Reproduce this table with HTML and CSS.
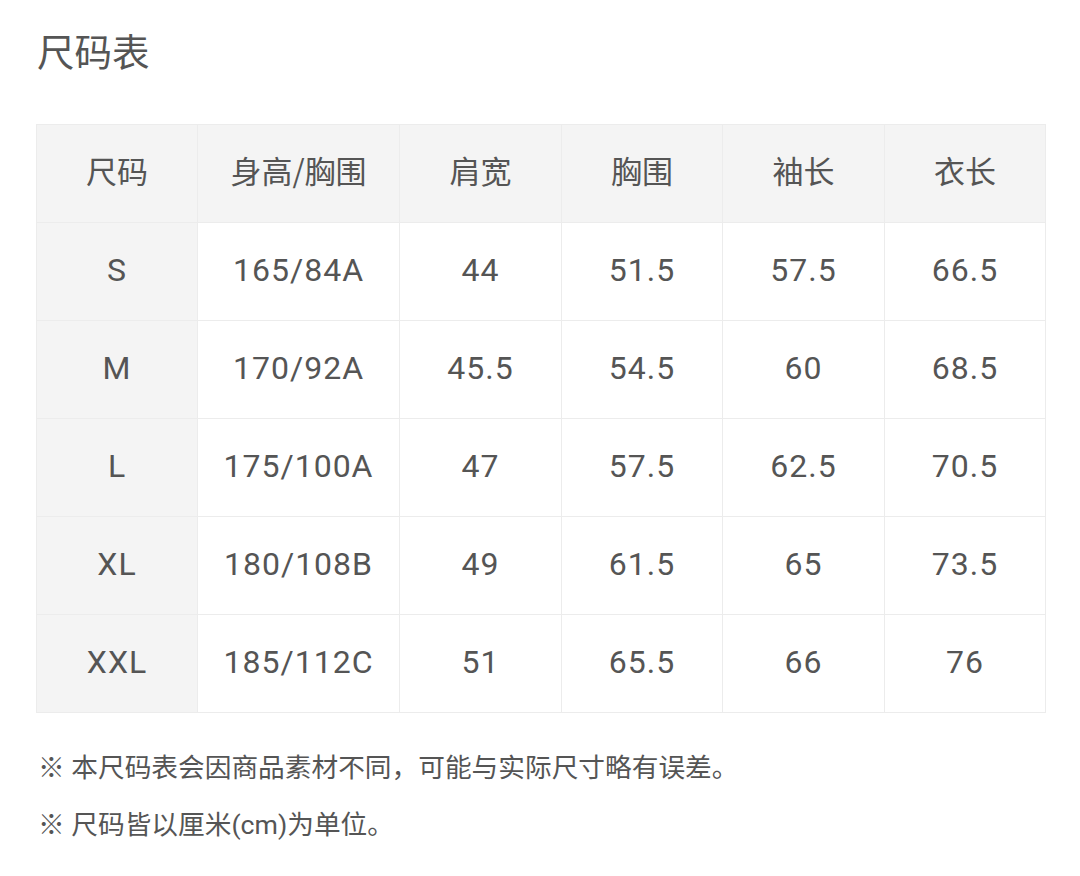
FILE: index.html
```html
<!DOCTYPE html>
<html lang="zh">
<head>
<meta charset="utf-8">
<link rel="stylesheet" href="styles.css">
</head>
<body>
<div class="page">
  <h1 class="title">尺码表</h1>
  <table class="size-table">
    <colgroup>
      <col class="c1"><col class="c2"><col class="c3"><col class="c4"><col class="c5"><col class="c6">
    </colgroup>
    <thead>
      <tr><th>尺码</th><th>身高/胸围</th><th>肩宽</th><th>胸围</th><th>袖长</th><th>衣长</th></tr>
    </thead>
    <tbody>
      <tr><th>S</th><td>165/84A</td><td>44</td><td>51.5</td><td>57.5</td><td>66.5</td></tr>
      <tr><th>M</th><td>170/92A</td><td>45.5</td><td>54.5</td><td>60</td><td>68.5</td></tr>
      <tr><th>L</th><td>175/100A</td><td>47</td><td>57.5</td><td>62.5</td><td>70.5</td></tr>
      <tr><th>XL</th><td>180/108B</td><td>49</td><td>61.5</td><td>65</td><td>73.5</td></tr>
      <tr><th>XXL</th><td>185/112C</td><td>51</td><td>65.5</td><td>66</td><td>76</td></tr>
    </tbody>
  </table>
  <div class="notes">
    <p>※ 本尺码表会因商品素材不同，可能与实际尺寸略有误差。</p>
    <p>※ 尺码皆以厘米(cm)为单位。</p>
  </div>
</div>
</body>
</html>
```

FILE: styles.css
```css
html, body {
  margin: 0;
  padding: 0;
  background: #ffffff;
}
.page {
  padding: 26px 35px 0 36px;
  font-family: Roboto, "Noto Sans CJK SC", sans-serif;
  color: #555555;
}
.title {
  margin: 0 0 0 1px;
  font-family: "Noto Sans CJK SC", sans-serif;
  font-size: 37.5px;
  font-weight: 400;
  line-height: 48px;
  color: #555555;
}
.size-table {
  margin-top: 50px;
  width: 1009px;
  border-collapse: collapse;
  table-layout: fixed;
}
.c1 { width: 161px; }
.c2 { width: 202px; }
.c3 { width: 162px; }
.c4 { width: 161px; }
.c5 { width: 162px; }
.c6 { width: 161px; }
.size-table th,
.size-table td {
  height: 98px;
  padding: 0 0 3px;
  box-sizing: border-box;
  border: 1px solid #ececec;
  text-align: center;
  vertical-align: middle;
  font-size: 32px;
  line-height: 40px;
  font-weight: 400;
  color: #555555;
  letter-spacing: 1px;
}
.size-table thead th {
  font-family: "Noto Sans CJK SC", sans-serif;
  font-size: 31px;
  letter-spacing: 0;
  padding: 0 0 8px;
}
.size-table thead th,
.size-table tbody th {
  background: #f4f4f4;
}
.notes {
  margin-top: 40px;
  font-size: 26.7px;
  line-height: 30px;
  color: #555555;
}
.notes p {
  margin: 0 0 27px 2px;
}
```
